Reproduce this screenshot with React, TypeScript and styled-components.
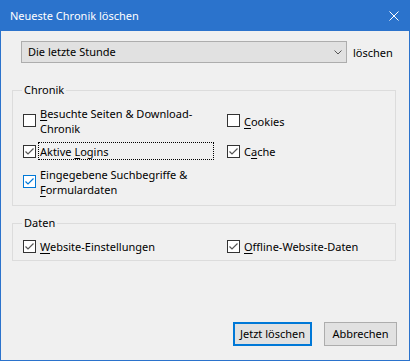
import React from "react";
import styled, { createGlobalStyle } from "styled-components";

const GlobalStyle = createGlobalStyle`
  html, body {
    margin: 0;
    padding: 0;
    background: #f0f0f0;
  }
  * {
    box-sizing: border-box;
  }
`;

const Window = styled.div`
  width: 410px;
  height: 361px;
  display: flex;
  flex-direction: column;
  background: #2b73cc;
  padding: 0 1px 1px;
  font-family: "Noto Sans", "Open Sans", sans-serif;
  font-size: 11px;
  color: #000;
`;

const TitleBar = styled.div`
  height: 31px;
  display: flex;
  align-items: center;
  justify-content: space-between;
  padding: 0 10px 0 9px;
  color: #fff;
  flex-shrink: 0;
`;

const TitleText = styled.span`
  font-size: 11px;
  line-height: 16px;
`;

const CloseIcon = styled.svg`
  width: 10px;
  height: 10px;
`;

const Body = styled.div`
  flex: 1;
  display: flex;
  flex-direction: column;
  background: #f0f0f0;
  padding: 10px 13px 14px 11px;
`;

const SelectRow = styled.div`
  display: flex;
  align-items: center;
  gap: 6px;
  padding-left: 9px;
  margin-bottom: 19px;
`;

const Select = styled.div`
  width: 326px;
  height: 22px;
  display: flex;
  align-items: center;
  justify-content: space-between;
  padding: 0 4px 0 6px;
  background: #e1e1e1;
  border: 1px solid #adadad;
  line-height: 16px;
`;

const Chevron = styled.svg`
  width: 8px;
  height: 5px;
`;

const GroupBox = styled.fieldset<{ $top?: number; $bottom?: number }>`
  margin: 0;
  margin-top: ${(p) => p.$top ?? 0}px;
  padding: 6px 9px ${(p) => p.$bottom ?? 7}px 10px;
  border: 1px solid #dcdcdc;
  min-width: 0;
`;

const Legend = styled.legend`
  padding: 0 2px;
  margin-left: -1px;
  line-height: 16px;
`;

const Grid = styled.div`
  display: grid;
  grid-template-columns: 204px 1fr;
  row-gap: 5px;
  align-items: center;
`;

const Item = styled.div`
  display: flex;
  align-items: center;
  width: 191px;
`;

const Box = styled.span<{ $hot?: boolean }>`
  width: 13px;
  height: 13px;
  flex-shrink: 0;
  display: flex;
  align-items: center;
  justify-content: center;
  background: #fff;
  border: 1px solid ${(p) => (p.$hot ? "#0078d7" : "#333")};
`;

const Label = styled.span<{ $focus?: boolean }>`
  flex: 1;
  margin-left: 2px;
  padding: 1px 0 0 1px;
  line-height: 15px;
  border: 1px dotted ${(p) => (p.$focus ? "#000" : "transparent")};
  white-space: nowrap;
`;

const Key = styled.span`
  text-decoration: underline;
  text-underline-offset: 2px;
`;

const Footer = styled.div`
  margin-top: auto;
  margin-right: -1px;
  display: flex;
  justify-content: flex-end;
  gap: 12px;
`;

const Button = styled.div<{ $default?: boolean; $w: number }>`
  width: ${(p) => p.$w}px;
  height: 24px;
  display: flex;
  align-items: center;
  justify-content: center;
  background: #e1e1e1;
  border: ${(p) => (p.$default ? "2px solid #0078d7" : "1px solid #adadad")};
  line-height: 16px;
`;

const Check: React.FC<{ hot?: boolean }> = ({ hot }) => (
  <svg width="11" height="11" viewBox="0 0 11 11">
    <polyline
      points="1.5,5.5 4,8 9.5,2.5"
      fill="none"
      stroke={hot ? "#0078d7" : "#555"}
      strokeWidth="1.2"
    />
  </svg>
);

interface CheckProps {
  checked?: boolean;
  hot?: boolean;
  focus?: boolean;
  children: React.ReactNode;
}

const CheckItem: React.FC<CheckProps> = ({ checked, hot, focus, children }) => (
  <Item>
    <Box $hot={hot}>{checked && <Check hot={hot} />}</Box>
    <Label $focus={focus}>{children}</Label>
  </Item>
);

export default function App() {
  return (
    <>
      <GlobalStyle />
      <Window>
        <TitleBar>
          <TitleText>Neueste Chronik löschen</TitleText>
          <CloseIcon viewBox="0 0 10 10">
            <path d="M0.5 0.5 L9.5 9.5 M9.5 0.5 L0.5 9.5" stroke="#fff" strokeWidth="1" />
          </CloseIcon>
        </TitleBar>
        <Body>
          <SelectRow>
            <Select>
              <span>Die letzte Stunde</span>
              <Chevron viewBox="0 0 8 5">
                <polyline points="0.5,0.5 4,4 7.5,0.5" fill="none" stroke="#555" strokeWidth="1" />
              </Chevron>
            </Select>
            <span>löschen</span>
          </SelectRow>

          <GroupBox>
            <Legend>Chronik</Legend>
            <Grid>
              <CheckItem>
                <Key>B</Key>esuchte Seiten &amp; Download-
                <br />
                Chronik
              </CheckItem>
              <CheckItem>
                <Key>C</Key>ookies
              </CheckItem>
              <CheckItem checked focus>
                Aktive <Key>L</Key>ogins
              </CheckItem>
              <CheckItem checked>
                C<Key>a</Key>che
              </CheckItem>
              <CheckItem checked hot>
                Eingegebene Suchbegriffe &amp;
                <br />
                <Key>F</Key>ormulardaten
              </CheckItem>
            </Grid>
          </GroupBox>

          <GroupBox $top={9} $bottom={5}>
            <Legend>Daten</Legend>
            <Grid>
              <CheckItem checked>
                <Key>W</Key>ebsite-Einstellungen
              </CheckItem>
              <CheckItem checked>
                <Key>O</Key>ffline-Website-Daten
              </CheckItem>
            </Grid>
          </GroupBox>

          <Footer>
            <Button $default $w={79}>Jetzt löschen</Button>
            <Button $w={73}>Abbrechen</Button>
          </Footer>
        </Body>
      </Window>
    </>
  );
}
